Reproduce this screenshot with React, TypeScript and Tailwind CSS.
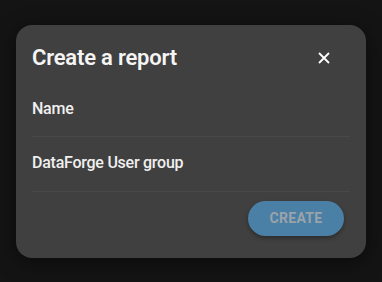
import React from "react";

export default function App() {
  return (
    <div
      className="w-[382px] h-[282px] bg-[#141414] flex items-start justify-center pt-[25px]"
      style={{ fontFamily: "Roboto, 'Noto Sans', sans-serif" }}
    >
      <div className="w-[350px] h-[233px] bg-[#404040] rounded-[16px] px-4 pt-[18px] flex flex-col shadow-[0_4px_20px_rgba(0,0,0,0.5)]">
        <div className="flex items-center justify-between h-[30px]">
          <h2 className="text-[22px] font-semibold text-[#f5f5f5] leading-[30px] tracking-[-0.2px]">
            Create a report
          </h2>
          <button className="w-[30px] h-[30px] mr-[11px] flex items-center justify-center text-white">
            <svg width="12" height="12" viewBox="0 0 12 12">
              <path d="M1 1 L11 11 M11 1 L1 11" stroke="white" strokeWidth="1.8" strokeLinecap="butt" />
            </svg>
          </button>
        </div>
        <div className="mt-[18px] h-[46px] flex items-center border-b border-[#484848]">
          <span className="text-[16px] font-medium tracking-[-0.25px] text-[#f0f0f0] leading-5 -mt-[10px]">Name</span>
        </div>
        <div className="h-[55px] flex items-center border-b border-[#484848]">
          <span className="text-[16px] font-medium tracking-[-0.25px] text-[#f0f0f0] leading-5 -mt-[2px]">DataForge User group</span>
        </div>
        <div className="flex justify-end mt-[9px] pr-[6px]">
          <button className="h-[35px] w-[96px] rounded-full bg-[#4a7fa6] text-[#9aa3aa] text-[14px] font-bold tracking-[0.3px] shadow-[0_2px_4px_rgba(0,0,0,0.35)]">
            CREATE
          </button>
        </div>
      </div>
    </div>
  );
}
